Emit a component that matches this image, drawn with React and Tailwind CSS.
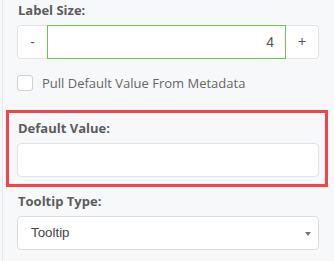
export default function App() {
  const label = "block text-[13px] leading-[18px] font-bold text-[#5c5c5c]";
  return (
    <div className="h-[261px] w-[334px] overflow-hidden bg-[#f7f8fa] flex" style={{ fontFamily: '"Open Sans", sans-serif' }}>
      <div className="w-[2px] shrink-0" />
      <div className="w-px shrink-0 bg-[#e6e7e9]" />
      <div className="pl-[14px] w-[316px] shrink-0 flex flex-col">
        <div className="pt-[1px]">
          <span className={label + " pl-px"}>Label Size:</span>
        </div>
        <div className="mt-[6px] flex h-[34px] w-[302px]">
          <div className="w-[30px] shrink-0 bg-white border border-r-0 border-[#e3e3e3] rounded-l-[4px] flex items-center justify-center text-[14px] text-[#555] pb-[1px]">-</div>
          <div className="flex-1 bg-white border border-[#6cc24a] flex items-center justify-end pr-[11px] text-[14px] text-[#555]" style={{ fontFamily: '"Liberation Sans", Arial, sans-serif' }}>4</div>
          <div className="w-[33px] shrink-0 bg-white border border-l-0 border-[#e3e3e3] rounded-r-[4px] flex items-center justify-center text-[15px] text-[#555] pb-[1px]">+</div>
        </div>
        <div className="mt-[16px] flex items-center h-[16px]">
          <div className="w-[16px] h-[16px] shrink-0 rounded-[3px] border border-[#cfcfcf] bg-white" />
          <span className="ml-[9px] text-[13px] leading-[18px] text-[#666]">Pull Default Value From Metadata</span>
        </div>
        <div className="mt-[19px] -ml-[11px] w-[322px] border-[3px] border-[#f4444a] pl-[8px] pr-[6px] pt-[6px] pb-[7px]">
          <span className={label + " pl-px"}>Default Value:</span>
          <div className="mt-[6px] h-[34px] w-[302px] bg-white border border-[#e3e3e3] rounded-[4px]" />
        </div>
        <div className="mt-[5px]">
          <span className={label + " pl-px"}>Tooltip Type:</span>
        </div>
        <div className="mt-[6px] h-[34px] w-[302px] bg-white border border-[#dcdcdc] rounded-[4px] flex items-center justify-between pl-[13px] pr-[7px]">
          <span className="text-[13.33px] text-[#444]" style={{ fontFamily: '"Liberation Sans", Arial, sans-serif' }}>Tooltip</span>
          <svg width="6" height="4" viewBox="0 0 6 4" className="mt-[1px]">
            <path d="M0 0 L6 0 L3 4 Z" fill="#777" />
          </svg>
        </div>
      </div>
    </div>
  );
}
